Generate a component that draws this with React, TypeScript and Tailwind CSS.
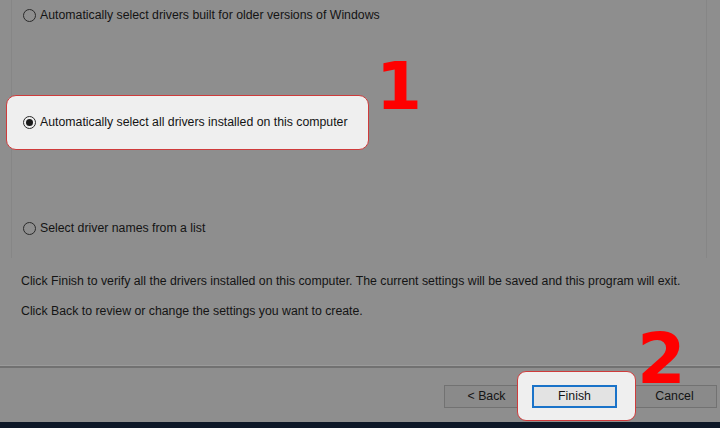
import React from "react";

function Radio({ checked }: { checked?: boolean }) {
  return (
    <span className="w-[13px] h-[13px] rounded-full border border-[#2a2a2a] flex items-center justify-center shrink-0">
      {checked && <span className="w-[7px] h-[7px] rounded-full bg-[#1a1a1a]" />}
    </span>
  );
}

export default function App() {
  return (
    <div
      className="relative w-[720px] h-[428px] overflow-hidden bg-[#8e8e8e] text-[#141414] text-[12.3px] flex flex-col"
      style={{ fontFamily: '"Liberation Sans", Arial, sans-serif' }}
    >
      {/* group box */}
      <div className="ml-[11px] w-[696px] border-l border-r border-[#868686] flex flex-col pb-[15px]">
        <div className="h-[30px] flex items-center gap-[4px] pl-[11px]">
          <Radio />
          <span>Automatically select drivers built for older versions of Windows</span>
        </div>
        <div className="mt-[65px] -ml-[6px] w-[363px] h-[55px] rounded-[10px] border-[1.5px] border-[#cf3b3b] bg-[#efefef] flex items-center gap-[4px] pl-[16px]">
          <Radio checked />
          <span>Automatically select all drivers installed on this computer</span>
        </div>
        <div className="mt-[63px] h-[30px] flex items-center gap-[4px] pl-[11px]">
          <Radio />
          <span>Select driver names from a list</span>
        </div>
      </div>

      <p className="mt-[15px] ml-[21px] leading-[16px]">
        Click Finish to verify all the drivers installed on this computer. The current settings will be saved and this program will exit.
      </p>
      <p className="mt-[14px] ml-[21px] leading-[16px]">
        Click Back to review or change the settings you want to create.
      </p>

      <div className="mt-[46px] h-[1px] bg-[#9a9a9a]" />
      <div className="h-[2px] bg-[#717171]" />

      <div className="flex justify-end pr-[3px] mt-[17px]">
        <div className="w-[85px] h-[23px] border border-[#727272] bg-[#8a8a8a] flex items-center justify-center">
          &lt; Back
        </div>
        <div className="relative ml-[3px] w-[85px] h-[23px]">
          <div className="absolute -left-[15px] -top-[14px] w-[119px] h-[50px] rounded-[9px] border-[1.5px] border-[#cf3b3b] bg-[#efefef]" />
          <div className="relative w-full h-full border-2 border-[#1a73c9] bg-[#e3e3e3] flex items-center justify-center">
            Finish
          </div>
        </div>
        <div className="ml-[15px] w-[85px] h-[23px] border border-[#727272] bg-[#8a8a8a] flex items-center justify-center">
          Cancel
        </div>
      </div>

      <div className="mt-auto h-[6px] bg-[#0e1828]" />

      <span
        className="absolute left-[376px] top-[67px] text-[66px] leading-[40px] font-bold text-[#ff0000]"
        style={{ fontFamily: '"DejaVu Sans", sans-serif' }}
      >
        1
      </span>
      <span
        className="absolute left-[637px] top-[339px] text-[70px] leading-[40px] font-bold text-[#ff0000]"
        style={{ fontFamily: '"DejaVu Sans", sans-serif' }}
      >
        2
      </span>
    </div>
  );
}
